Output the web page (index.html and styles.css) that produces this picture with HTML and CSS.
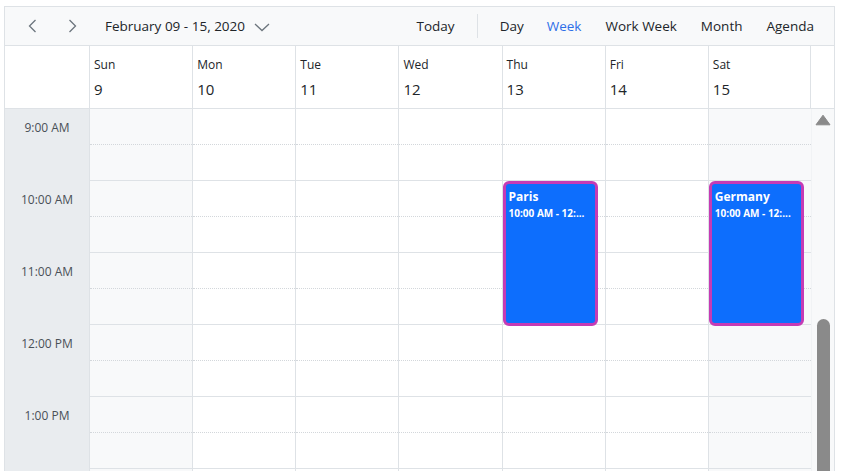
FILE: index.html
```html
<!DOCTYPE html>
<html>
<head>
<meta charset="utf-8">
<link rel="stylesheet" href="styles.css">
</head>
<body>
<div class="scheduler">
  <div class="toolbar">
    <div class="nav">
      <span class="icon-btn"><svg width="14" height="16" viewBox="0 0 14 16"><path d="M9.5 2 L3.5 8 L9.5 14" fill="none" stroke="#6c757d" stroke-width="1.3"/></svg></span>
      <span class="icon-btn"><svg width="14" height="16" viewBox="0 0 14 16"><path d="M4.5 2 L10.5 8 L4.5 14" fill="none" stroke="#6c757d" stroke-width="1.3"/></svg></span>
      <span class="range">February 09 - 15, 2020</span>
      <span class="caret"><svg width="16" height="10" viewBox="0 0 16 10"><path d="M1 2 L8 8.5 L15 2" fill="none" stroke="#6c757d" stroke-width="1.3"/></svg></span>
    </div>
    <div class="views">
      <span class="view today">Today</span>
      <span class="sep"></span>
      <span class="view day">Day</span>
      <span class="view active">Week</span>
      <span class="view">Work Week</span>
      <span class="view">Month</span>
      <span class="view">Agenda</span>
    </div>
  </div>
  <div class="head">
    <div class="corner"></div>
    <div class="dh"><span class="dn">Sun</span><span class="dd">9</span></div>
    <div class="dh"><span class="dn">Mon</span><span class="dd">10</span></div>
    <div class="dh"><span class="dn">Tue</span><span class="dd">11</span></div>
    <div class="dh"><span class="dn">Wed</span><span class="dd">12</span></div>
    <div class="dh"><span class="dn">Thu</span><span class="dd">13</span></div>
    <div class="dh"><span class="dn">Fri</span><span class="dd">14</span></div>
    <div class="dh"><span class="dn">Sat</span><span class="dd">15</span></div>
    <div class="head-gap"></div>
  </div>
  <div class="grid">
    <div class="times">
      <div class="tslot">9:00 AM</div><div class="tslot"></div>
      <div class="tslot">10:00 AM</div><div class="tslot"></div>
      <div class="tslot">11:00 AM</div><div class="tslot"></div>
      <div class="tslot">12:00 PM</div><div class="tslot"></div>
      <div class="tslot">1:00 PM</div><div class="tslot"></div>
      <div class="tslot"></div><div class="tslot"></div>
    </div>
    <div class="col weekend">
      <div class="half"></div><div class="full"></div><div class="half"></div><div class="full"></div><div class="half"></div><div class="full"></div><div class="half"></div><div class="full"></div><div class="half"></div><div class="full"></div><div class="half"></div><div class="full"></div>
    </div>
    <div class="col">
      <div class="half"></div><div class="full"></div><div class="half"></div><div class="full"></div><div class="half"></div><div class="full"></div><div class="half"></div><div class="full"></div><div class="half"></div><div class="full"></div><div class="half"></div><div class="full"></div>
    </div>
    <div class="col">
      <div class="half"></div><div class="full"></div><div class="half"></div><div class="full"></div><div class="half"></div><div class="full"></div><div class="half"></div><div class="full"></div><div class="half"></div><div class="full"></div><div class="half"></div><div class="full"></div>
    </div>
    <div class="col">
      <div class="half"></div><div class="full"></div><div class="half"></div><div class="full"></div><div class="half"></div><div class="full"></div><div class="half"></div><div class="full"></div><div class="half"></div><div class="full"></div><div class="half"></div><div class="full"></div>
    </div>
    <div class="col">
      <div class="half"></div><div class="full"></div><div class="half"></div><div class="full"></div><div class="half"></div><div class="full"></div><div class="half"></div><div class="full"></div><div class="half"></div><div class="full"></div><div class="half"></div><div class="full"></div>
      <div class="event"><span class="et">Paris</span><span class="em">10:00 AM - 12:...</span></div>
    </div>
    <div class="col">
      <div class="half"></div><div class="full"></div><div class="half"></div><div class="full"></div><div class="half"></div><div class="full"></div><div class="half"></div><div class="full"></div><div class="half"></div><div class="full"></div><div class="half"></div><div class="full"></div>
    </div>
    <div class="col weekend">
      <div class="half"></div><div class="full"></div><div class="half"></div><div class="full"></div><div class="half"></div><div class="full"></div><div class="half"></div><div class="full"></div><div class="half"></div><div class="full"></div><div class="half"></div><div class="full"></div>
      <div class="event"><span class="et">Germany</span><span class="em">10:00 AM - 12:...</span></div>
    </div>
    <div class="scrollbar">
      <svg class="arrow" width="16" height="12" viewBox="0 0 16 12"><path d="M8 1.2 L15 10.8 L1 10.8 Z" fill="#8a8a8a" stroke="#8a8a8a" stroke-width="1" stroke-linejoin="round"/></svg>
      <div class="thumb"></div>
    </div>
  </div>
</div>
</body>
</html>
```

FILE: styles.css
```css
html, body {
  margin: 0;
  padding: 0;
  overflow: hidden;
  background: #ffffff;
}
body {
  font-family: "Open Sans", "Noto Sans", sans-serif;
  color: #212529;
}
.scheduler {
  margin: 6px 0 0 4px;
  width: 831px;
  border: 1px solid #dee2e6;
  box-sizing: border-box;
}
.toolbar {
  height: 39px;
  box-sizing: border-box;
  background: #f8f9fa;
  border-bottom: 1px solid #dee2e6;
  display: flex;
  align-items: center;
  justify-content: space-between;
  font-size: 13.5px;
}
.nav {
  display: flex;
  align-items: center;
  padding-left: 8px;
}
.icon-btn {
  width: 39px;
  display: flex;
  justify-content: center;
}
.range {
  margin-left: 14px;
}
.caret {
  margin-left: 9px;
  display: flex;
  padding-top: 2px;
}
.views {
  display: flex;
  align-items: center;
  padding-right: 20px;
}
.view {
  margin-left: 24px;
}
.view.today {
  margin-left: 0;
}
.view.day {
  margin-left: 22px;
}
.view.active {
  color: #2f6fe8;
  margin-left: 23px;
}
.sep {
  width: 1px;
  height: 24px;
  background: #dee2e6;
  margin-left: 22px;
  margin-right: 0;
}
.head {
  display: grid;
  grid-template-columns: 84px repeat(7, 1fr) 23px;
  height: 63px;
  box-sizing: border-box;
  border-bottom: 1px solid #dee2e6;
}
.dh {
  border-left: 1px solid #dee2e6;
  display: flex;
  flex-direction: column;
  padding: 10px 0 0 4px;
}
.dh:nth-child(8) {
  border-right: 1px solid #dee2e6;
}
.dn {
  font-size: 12px;
  line-height: 17px;
}
.dd {
  font-size: 15px;
  line-height: 20px;
  margin-top: 6px;
}
.grid {
  display: grid;
  grid-template-columns: 84px repeat(7, 1fr) 23px;
}
.times {
  background: #e9ecef;
}
.tslot {
  height: 36px;
  display: flex;
  align-items: center;
  justify-content: center;
  font-size: 12px;
  color: #495057;
  padding-top: 1px;
  box-sizing: border-box;
}
.col {
  position: relative;
  border-left: 1px solid #dee2e6;
  background: #ffffff;
}
.col.weekend {
  background: #f8f9fa;
}
.half, .full {
  height: 36px;
  box-sizing: border-box;
}
.half {
  border-bottom: 1px dotted #d3d7db;
}
.full {
  border-bottom: 1px solid #dee2e6;
}
.event {
  position: absolute;
  top: 72px;
  left: 0;
  width: 95px;
  height: 145px;
  box-sizing: border-box;
  background: #0d6efd;
  border: 3px solid #c53bb5;
  border-radius: 6px;
  color: #ffffff;
  display: flex;
  flex-direction: column;
  padding: 4px 0 0 3px;
  font-weight: 700;
}
.et {
  font-size: 12px;
  line-height: 17px;
}
.em {
  font-size: 10px;
  line-height: 15px;
  margin-top: 1px;
}
.scrollbar {
  background: #f8f9fa;
  border-left: 1px solid #f1f3f5;
  display: flex;
  flex-direction: column;
  align-items: center;
}
.arrow {
  margin-top: 5px;
}
.thumb {
  margin-top: 193px;
  width: 13px;
  height: 200px;
  background: #8a8a8a;
  border-radius: 7px 7px 0 0;
}
```
